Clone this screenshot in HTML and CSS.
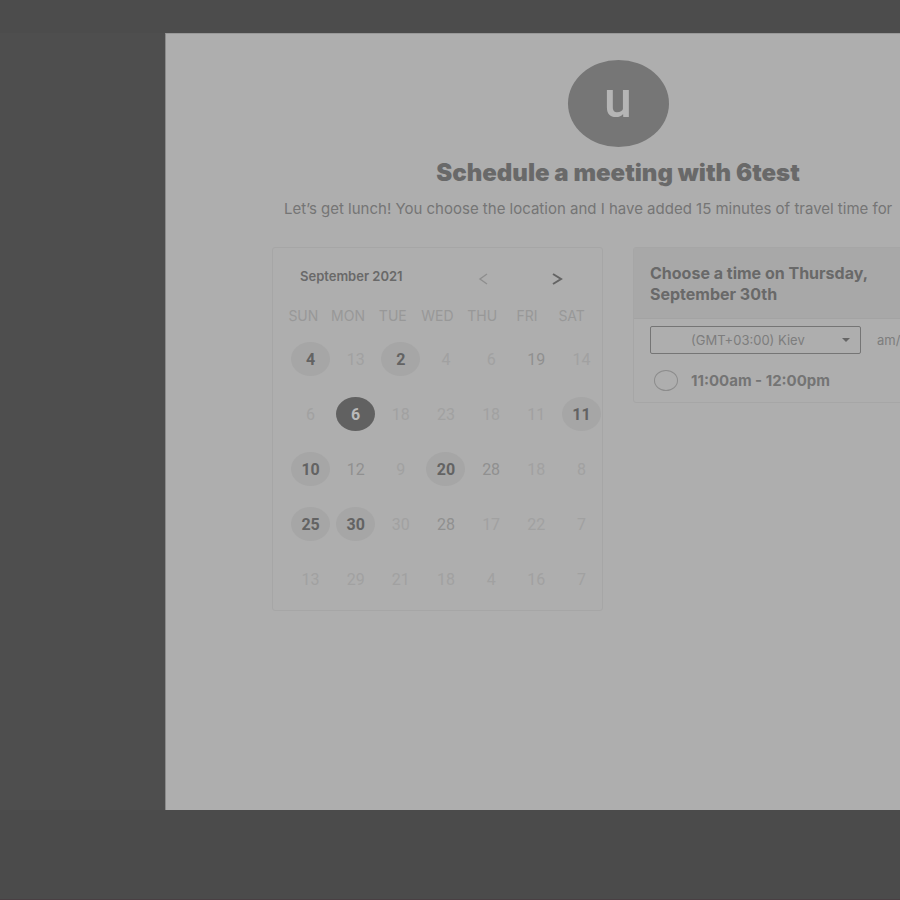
FILE: index.html
```html
<!DOCTYPE html>
<html lang="en">
<head>
<meta charset="utf-8">
<meta name="viewport" content="width=device-width, initial-scale=1">
<title>Schedule a meeting with 6test</title>
<link rel="stylesheet" href="styles.css">
</head>
<body>
<main class="panel">
  <div class="content">
    <header class="intro">
      <div class="avatar">u</div>
      <h1>Schedule a meeting with 6test</h1>
      <p>Let’s get lunch! You choose the location and I have added 15 minutes of travel time for</p>
    </header>
    <div class="columns">
      <section class="card calendar" aria-label="Calendar">
        <div class="month">
          <h2>September 2021</h2>
          <button class="arrow muted" type="button" aria-label="Previous month"><svg width="12" height="14" viewBox="0 0 12 14"><path d="M10 2 3 7l7 5"/></svg></button>
          <button class="arrow" type="button" aria-label="Next month"><svg width="12" height="14" viewBox="0 0 12 14"><path d="m2 2 8 5-8 5"/></svg></button>
        </div>
        <div class="weekdays"><span>SUN</span><span>MON</span><span>TUE</span><span>WED</span><span>THU</span><span>FRI</span><span>SAT</span></div>
        <div class="days">
          <button type="button" class="open">4</button><button type="button">13</button><button type="button" class="open">2</button><button type="button">4</button><button type="button">6</button><button type="button" class="past">19</button><button type="button">14</button>
          <button type="button">6</button><button type="button" class="open selected">6</button><button type="button">18</button><button type="button">23</button><button type="button">18</button><button type="button">11</button><button type="button" class="open">11</button>
          <button type="button" class="open">10</button><button type="button" class="past">12</button><button type="button">9</button><button type="button" class="open">20</button><button type="button" class="past">28</button><button type="button">18</button><button type="button">8</button>
          <button type="button" class="open">25</button><button type="button" class="open">30</button><button type="button">30</button><button type="button" class="past">28</button><button type="button">17</button><button type="button">22</button><button type="button">7</button>
          <button type="button">13</button><button type="button">29</button><button type="button">21</button><button type="button">18</button><button type="button">4</button><button type="button">16</button><button type="button">7</button>
        </div>
      </section>
      <section class="card times">
        <h2>Choose a time on Thursday, September 30th</h2>
        <div class="zone">
          <div class="picker">
            <select aria-label="Time zone"><option>(GMT+03:00) Kiev</option></select>
            <svg class="caret" width="8" height="4" viewBox="0 0 8 4"><path d="M0 0h8L4 4z"/></svg>
          </div>
          <span>am/pm</span>
        </div>
        <label class="slot"><input type="radio" name="slot">11:00am - 12:00pm</label>
      </section>
    </div>
  </div>
</main>
</body>
</html>
```
FILE: styles.css
```css
* { box-sizing: border-box; }

body {
  min-height: 100vh;
  margin: 0;
  padding: 33px 0 89px 165px;
  display: flex;
  background: linear-gradient(#4c4c4c 33px, transparent 33px),
    linear-gradient(to top, #4b4b4b 90px, transparent 90px), #4e4e4e;
  border-bottom: 1px solid #493f43;
  font-family: Roboto, sans-serif;
  color: #696969;
  overflow: hidden;
}

h1, h2, p { margin: 0; }

button, select, input { font: inherit; color: inherit; margin: 0; }

button { padding: 0; border: 0; background: none; }

.panel {
  flex: 1;
  min-width: 0;
  overflow: hidden;
  background: #aeaeae;
  border-left: 1px solid #8a8a8a;
  border-top: 1px solid #999;
}

.content { min-width: 904px; padding: 26px 106px; }

.intro { text-align: center; }

.avatar {
  width: 101px;
  height: 87px;
  margin: 0 auto;
  border-radius: 50%;
  background: #767676;
  color: #b5b5b5;
  font-size: 50px;
  font-weight: 500;
  line-height: 80px;
}

h1 {
  margin-top: 12px;
  font-family: Inter, sans-serif;
  font-size: 24px;
  font-weight: 900;
  line-height: 28px;
}

.intro p {
  margin: 12px 0 28px;
  padding-left: 12px;
  text-align: left;
  white-space: nowrap;
  font-family: Inter, sans-serif;
  font-size: 15px;
  line-height: 20px;
  color: #757575;
}

.columns {
  display: grid;
  grid-template-columns: 1fr 1fr;
  gap: 30px;
  align-items: start;
}

.card { border: 1px solid #a6a6a6; border-radius: 3px; }

.month {
  display: grid;
  grid-template-columns: 1fr 74px 74px;
  align-items: start;
  padding: 16px 8px 0 27px;
}

.month h2 {
  font-family: Inter, sans-serif;
  font-size: 13px;
  font-weight: 600;
  line-height: 24px;
}

.arrow { height: 30px; display: grid; place-items: center; }

.arrow svg { fill: none; stroke: #646464; stroke-width: 2; }

.arrow.muted svg { stroke: #8e8e8e; stroke-width: 1.4; }

.weekdays {
  display: grid;
  grid-template-columns: repeat(7, 1fr);
  padding: 12px 8px 5px;
  text-align: center;
  font-family: Inter, sans-serif;
  font-size: 14px;
  line-height: 20px;
  color: #989898;
}

.days {
  display: grid;
  grid-template-columns: repeat(7, 1fr);
  row-gap: 21px;
  justify-items: center;
  margin-right: -2px;
  padding: 11px 0 14px 15px;
}

.days button {
  width: 39px;
  height: 34px;
  border-radius: 50%;
  font-size: 16px;
  color: #a1a1a1;
}

.days .past { color: #909090; }

.days .open { background: #a6a6a6; color: #636363; font-weight: 700; }

.days .selected { background: #616161; color: #bababa; }

.times h2 {
  padding: 15px 90px 13px 16px;
  border-bottom: 1px solid #a3a3a3;
  background: #a8a8a8;
  font-family: Inter, sans-serif;
  font-size: 16px;
  font-weight: 700;
  line-height: 21px;
}

.zone {
  display: flex;
  align-items: center;
  gap: 16px;
  padding: 7px 16px 0;
  font-family: Inter, sans-serif;
  font-size: 13px;
  color: #7d7d7d;
}

.picker { display: grid; align-items: center; width: 211px; }

.picker > * { grid-area: 1 / 1; }

.picker select {
  width: 100%;
  height: 28px;
  padding: 0 40px;
  border: 1px solid #757575;
  border-radius: 2px;
  background: none;
  appearance: none;
}

.caret {
  justify-self: end;
  margin-right: 11px;
  fill: #666;
  pointer-events: none;
}

.slot {
  display: flex;
  align-items: center;
  gap: 13px;
  padding: 16px 20px 11px;
  font-family: Inter, sans-serif;
  font-size: 15px;
  font-weight: 700;
  line-height: 21px;
  color: #747474;
}

.slot input {
  width: 24px;
  height: 21px;
  border: 1px solid #8c8c8c;
  border-radius: 50%;
  appearance: none;
}
```
